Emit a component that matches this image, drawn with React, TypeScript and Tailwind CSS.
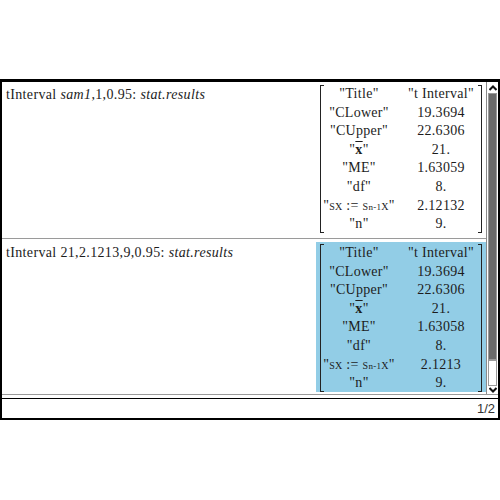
import { Fragment } from "react";

function SxLabel() {
  return (
    <span className="[font-variant-caps:small-caps]">
      "sx := s<span className="text-[9px] [font-variant-caps:normal]">n-1</span>x"
    </span>
  );
}

function XBar() {
  return (
    <span>
      "<span className="font-bold overline">x</span>"
    </span>
  );
}

function Matrix({ values }: { values: string[] }) {
  const labels: React.ReactNode[] = [
    '"Title"',
    '"CLower"',
    '"CUpper"',
    <XBar key="x" />,
    '"ME"',
    '"df"',
    <SxLabel key="sx" />,
    '"n"',
  ];
  return (
    <div className="flex h-[148px]">
      <div className="w-[4px] border-l-[1.5px] border-y border-[#222]" />
      <div className="grid grid-cols-[76px_84px] auto-rows-[18.6px] content-start text-center leading-[18.6px] -ml-[3px] tracking-[0.3px]">
        {labels.map((l, i) => (
          <Fragment key={i}>
            <div className="whitespace-nowrap overflow-visible">{l}</div>
            <div className="whitespace-nowrap pl-[4px]">{values[i]}</div>
          </Fragment>
        ))}
      </div>
      <div className="w-[4px] border-r-[1.5px] border-y border-[#222] -ml-[3px]" />
    </div>
  );
}

function ScrollBar() {
  return (
    <div className="w-[12px] border-l border-[#8a8a8a] flex flex-col items-center pt-[1px]">
      <div className="h-[10px] w-[10px] flex items-center justify-center">
        <svg width="8" height="6" viewBox="0 0 8 6">
          <path d="M0.5 5 L4 1.5 L7.5 5" fill="none" stroke="#111" strokeWidth="2" />
        </svg>
      </div>
      <div className="w-[9px] h-[267px] bg-[#6a6a6a] border border-[#9a9a9a]" />
      <div className="w-[9px] flex-1 border border-[#9a9a9a] bg-white" />
      <div className="h-[8px] w-[10px] flex items-center justify-center">
        <svg width="8" height="6" viewBox="0 0 8 6">
          <path d="M0.5 1 L4 4.5 L7.5 1" fill="none" stroke="#111" strokeWidth="2" />
        </svg>
      </div>
    </div>
  );
}

export default function App() {
  return (
    <div className="w-[500px] h-[500px] bg-white font-['Liberation_Serif',serif] text-[14px] text-[#1c1c1c]">
      <div className="h-[79px]" />
      <div className="h-[341px] border-t-[3px] border-x-2 border-b-2 border-black flex flex-col">
        <div className="h-[313px] flex border-b border-[#9a9a9a]">
          <div className="flex-1 flex flex-col">
            <div className="h-[157px] flex border-b border-[#9a9a9a]">
              <div className="flex-1 pl-[4px] pt-[4px] leading-[18px] whitespace-nowrap tracking-[0.35px]">
                tInterval <i>sam1</i>,1,0.95: <i>stat.results</i>
              </div>
              <div className="w-[170px] pt-[3px] pl-[4px]">
                <Matrix
                  values={['"t Interval"', "19.3694", "22.6306", "21.", "1.63059", "8.", "2.12132", "9."]}
                />
              </div>
            </div>
            <div className="flex-1 flex">
              <div className="flex-1 pl-[4px] pt-[5px] leading-[18px] whitespace-nowrap tracking-[0.35px]">
                tInterval 21,2.1213,9,0.95: <i>stat.results</i>
              </div>
              <div className="w-[170px] pt-[3px] pb-[2px]">
                <div className="h-full bg-[#92cde6] pt-[2px] pl-[4px]">
                  <Matrix
                    values={['"t Interval"', "19.3694", "22.6306", "21.", "1.63058", "8.", "2.1213", "9."]}
                  />
                </div>
              </div>
            </div>
          </div>
          <ScrollBar />
        </div>
        <div className="h-[4px]" />
        <div className="flex-1 border-t border-black flex items-center justify-end pr-[3px] font-['Liberation_Sans',sans-serif] text-[13px] text-[#333]">
          1/2
        </div>
      </div>
    </div>
  );
}
